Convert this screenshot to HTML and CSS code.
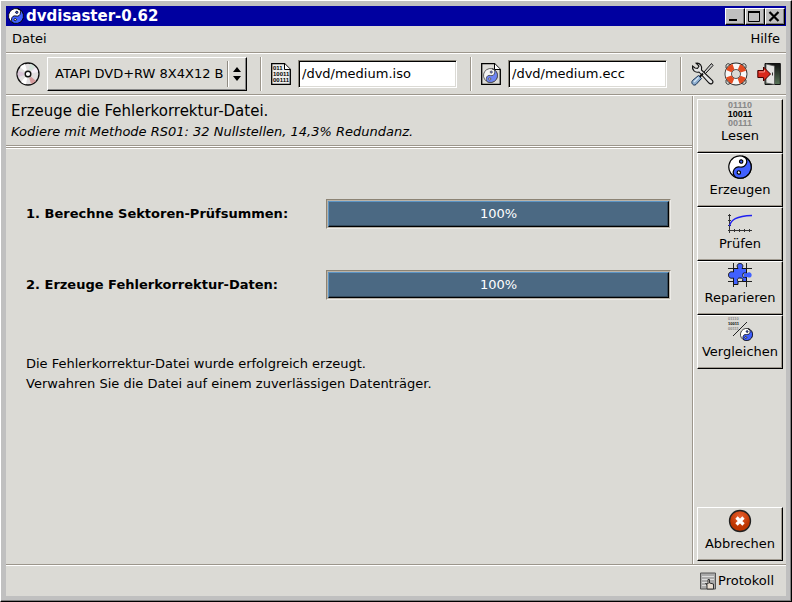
FILE: index.html
```html
<!DOCTYPE html>
<html lang="de">
<head>
<meta charset="utf-8">
<title>dvdisaster-0.62</title>
<link rel="stylesheet" href="styles.css">
</head>
<body>
<svg class="defs" aria-hidden="true">
  <symbol id="yinyang" viewBox="0 0 24 24">
    <g transform="rotate(12 12 12)" stroke="#000" stroke-width="1.2">
      <circle cx="12" cy="12" r="11.2" fill="#fff"/>
      <path d="M12 .8A5.6 5.6 0 0 1 12 12A5.6 5.6 0 0 0 12 23.2A11.2 11.2 0 0 0 12 .8Z" fill="#4060ff"/>
      <circle cx="12" cy="6.4" r="1.7" fill="#4060ff"/>
      <circle cx="12" cy="17.6" r="1.7" fill="#fff"/>
    </g>
  </symbol>
</svg>
<div class="window">
  <header class="titlebar">
    <svg class="title-icon" viewBox="0 0 24 24"><use href="#yinyang"/></svg>
    <h1>dvdisaster-0.62</h1>
    <button class="winbtn" aria-label="Minimieren"><svg viewBox="0 0 16 14"><path d="M3 11h8" stroke="#000" stroke-width="2"/></svg></button>
    <button class="winbtn" aria-label="Maximieren"><svg viewBox="0 0 16 14"><path d="M2.500 3v9.500h11V3" fill="none" stroke="#000"/><path d="M2 3h12" stroke="#000" stroke-width="2"/></svg></button>
    <button class="winbtn" aria-label="Schließen"><svg viewBox="0 0 16 14"><path d="M3.500 3l9 9M12.500 3l-9 9" stroke="#000" stroke-width="2.200"/></svg></button>
  </header>
  <nav class="menubar">
    <button class="menu">Datei</button>
    <button class="menu">Hilfe</button>
  </nav>
  <div class="toolbar">
    <svg class="icon24" viewBox="0 0 24 24">
      <circle cx="12" cy="12" r="11" fill="#e2dfe0" stroke="#111" stroke-width="1.300"/>
      <path d="M12 12L4 5A11 11 0 0 1 9 2Z" fill="#fff"/>
      <path d="M12 12L14 1.800A10.400 10.400 0 0 1 19 4.500Z" fill="#d4e4dc"/>
      <path d="M12 12L20 5.500A10.400 10.400 0 0 1 22 10Z" fill="#f5eef8"/>
      <path d="M12 12L20 19A10.400 10.400 0 0 1 15 22Z" fill="#d59a9c"/>
      <path d="M12 12L2 9A10.400 10.400 0 0 0 2 15Z" fill="#d8c4d6"/>
      <path d="M12 12L5 20A10.400 10.400 0 0 0 10 22.200Z" fill="#fff"/>
      <circle cx="12" cy="12" r="4" fill="#dedbd7"/>
      <circle cx="12" cy="12" r="2.800" fill="#fff" stroke="#111" stroke-width="1.400"/>
    </svg>
    <div class="drive">
      <select aria-label="Laufwerk"><option>ATAPI DVD+RW 8X4X12 B</option></select>
      <svg class="drive-arrows" viewBox="0 0 16 28"><path d="M.5 1v26" stroke="#8e8a82"/><path d="M1.500 1v26" stroke="#fff"/><path d="M6 12l4-5 4 5zM6 16l4 5 4-5z"/></svg>
    </div>
    <span class="sep"></span>
    <label class="file" for="iso" aria-label="Abbilddatei"><svg class="doc" viewBox="0 0 20 22">
      <path d="M.7.700H13.500L19.300 6.500V21.300H.7Z" fill="#eeeeec" stroke="#000" stroke-width="1.300"/>
      <path d="M13.500.700V6.500h5.800" fill="#fff" stroke="#000"/>
      <g class="bits-doc"><text x="2" y="7">011</text><text x="2" y="13">10011</text><text x="2" y="19">00111</text></g>
    </svg></label>
    <input class="entry" id="iso" type="text" value="/dvd/medium.iso">
    <span class="sep"></span>
    <label class="file" for="ecc" aria-label="Fehlerkorrektur-Datei"><svg class="doc" viewBox="0 0 20 22">
      <path d="M.7.700H13.500L19.300 6.500V21.300H.7Z" fill="#deddd9" stroke="#000" stroke-width="1.300"/>
      <path d="M13.500.700V6.500h5.800" fill="#fff" stroke="#000"/>
      <use href="#yinyang" x="2" y="5" width="15" height="15" opacity=".7"/>
    </svg></label>
    <input class="entry" id="ecc" type="text" value="/dvd/medium.ecc">
    <span class="sep"></span>
    <div class="actions">
      <button class="tool" aria-label="Einstellungen"><svg viewBox="0 0 24 24">
        <path d="M20.500 1.500L13 10l1.500 1.500L22 3.500Z" fill="#ccc" stroke="#111"/>
        <path d="M5 1.200L8 4 6.500 6.500 4 6 1.500 4C.8 8 4 11 8 10L18 21C20 23 23 21 21.500 18.500L10.500 8C11.500 4 9 .5 5 1.200Z" fill="#e4e4e4" stroke="#111" stroke-width="1.100"/>
        <path d="M12 11.500L8.500 15" stroke="#111" stroke-width="2"/>
        <path d="M7.500 13.500L1.500 18.500C-.5 21 2.500 24.500 5 22.500L10.500 16.500Z" fill="#8eaed0" stroke="#173052"/>
        <path d="M7.500 15.500L3 20" stroke="#d5e5f3" stroke-width="1.400"/>
      </svg></button>
      <button class="tool" aria-label="Hilfe"><svg viewBox="0 0 24 24">
        <path d="M2 6V3l2-1.500L7 3M17 3l3-1.500L22 3v3M2 18v3l2 1.500L7 21M17 21l3 1.500 2-1.500v-3" fill="none" stroke="#444"/>
        <circle cx="12" cy="12" r="7.700" fill="none" stroke="#222" stroke-width="7.400"/>
        <circle cx="12" cy="12" r="7.700" fill="none" stroke="#f7f7f7" stroke-width="5.800"/>
        <circle cx="12" cy="12" r="7.700" fill="none" stroke="#e44a20" stroke-width="5.800" stroke-dasharray="6.500 5.595" stroke-dashoffset="-2.800"/>
      </svg></button>
      <button class="tool" aria-label="Beenden"><svg viewBox="0 0 24 24">
        <defs><linearGradient id="dark" x2="0" y2="1"><stop offset="0" stop-color="#111"/><stop offset="1" stop-color="#5a765a"/></linearGradient></defs>
        <path d="M8 1.500H23.300V22.500H8Z" fill="url(#dark)" stroke="#111"/>
        <path d="M9 2L17.500 4V22.500L9 21Z" fill="#e4e4e2" stroke="#555" stroke-width=".8"/>
        <path d="M15.500 10.500v3" stroke="#333"/>
        <path d="M.8 8.500H6.500V5L13.500 12 6.500 19V15.500H.8Z" fill="#d9291c" stroke="#400"/>
        <path d="M2 10h5.500V8" fill="none" stroke="#f49186"/>
      </svg></button>
    </div>
  </div>
  <div class="body">
    <main class="main">
      <section class="heading">
        <h2>Erzeuge die Fehlerkorrektur-Datei.</h2>
        <p>Kodiere mit Methode RS01: 32 Nullstellen, 14,3% Redundanz.</p>
      </section>
      <section class="content">
        <div class="step"><span id="s1">1. Berechne Sektoren-Prüfsummen:</span><div class="trough"><div class="bar" role="progressbar" aria-valuenow="100" aria-labelledby="s1">100%</div></div></div>
        <div class="step"><span id="s2">2. Erzeuge Fehlerkorrektur-Daten:</span><div class="trough"><div class="bar" role="progressbar" aria-valuenow="100" aria-labelledby="s2">100%</div></div></div>
        <p class="result">Die Fehlerkorrektur-Datei wurde erfolgreich erzeugt.<br>Verwahren Sie die Datei auf einem zuverlässigen Datenträger.</p>
      </section>
    </main>
    <aside class="sidebar">
      <button class="side"><svg viewBox="0 0 26 26"><g class="bits"><text x="13" y="8" class="dim">01110</text><text x="13" y="17">10011</text><text x="13" y="26" class="dim">00111</text></g></svg>Lesen</button>
      <button class="side"><svg viewBox="0 0 26 26"><use href="#yinyang" x="1" y="1" width="24" height="24"/></svg>Erzeugen</button>
      <button class="side"><svg viewBox="0 0 26 26"><path d="M2.500 6V25M1 22.500H25M1 7.500h3M1 12.500h3M1 17.500h3M7.500 21v3M12.500 21v3M17.500 21v3M22.500 21v3" fill="none" stroke="#333"/><path d="M2.500 18C4 12 9 8 25 7.500" fill="none" stroke="#2020f0" stroke-width="1.400"/></svg>Prüfen</button>
      <button class="side"><svg viewBox="0 0 26 26"><path d="M6.500 1V25M19.500 1V25M1 6.500H25M1 19.500H25" stroke="#222"/><path d="M6.500 6.500H11C9 3 11 1.500 13 1.500S17 3 15 6.500H19.500V11H16.500C15.500 12.500 15.500 14 16.500 15.500H19.500V19.500H15.500C16.500 16.500 15 16 13 16S9.500 17 11 19.500V22.500H6.500V16C3 17 1.500 15 1.500 13S3 9 6.500 10Z" fill="#4060ff" stroke="#111"/><path d="M17 11C20 12.500 20.500 9.500 23 10.500S25 15 23 15.500 20 14 17 15.500Z" fill="#4060ff"/></svg>Reparieren</button>
      <button class="side"><svg viewBox="0 0 26 26"><g class="bits-small"><text x="1" y="4" class="dim">01110</text><text x="1" y="9">10011</text><text x="1" y="14" class="dim">00111</text></g><path d="M20 6L6 20" stroke="#222"/><use href="#yinyang" x="13" y="12" width="13" height="13"/></svg>Vergleichen</button>
      <button class="side cancel"><svg viewBox="0 0 26 26"><defs><radialGradient id="red" cy=".3"><stop offset="0" stop-color="#e86030"/><stop offset="1" stop-color="#bd3500"/></radialGradient></defs><circle cx="13" cy="13" r="10.500" fill="url(#red)" stroke="#222" stroke-width="1.300"/><path d="M9.500 9.500l7 7M16.500 9.500l-7 7" stroke="#fff" stroke-width="3.200"/></svg>Abbrechen</button>
    </aside>
  </div>
  <footer class="statusbar">
    <button class="log"><svg viewBox="0 0 16 18"><path d="M.5 1H15.500V17H.5Z" fill="#aaa" stroke="#555"/><path d="M2 4.500H14M2 7.500H14M2 10.500H9M2 13.500H6" stroke="#ddd"/><path d="M7 17V13L5.500 11.500 8 12V7.500H9.500V11L13.500 12V17Z" fill="#e8ddd0" stroke="#333"/></svg>Protokoll</button>
  </footer>
</div>
</body>
</html>
```

FILE: styles.css
```css
* { box-sizing: border-box; }

body {
  margin: 0;
  background: #dbdad5;
  color: #000;
  font: 13px/20px "DejaVu Sans", sans-serif;
}

h1, h2, p { margin: 0; }

button, input, select {
  margin: 0;
  padding: 0;
  border: 0;
  border-radius: 0;
  background: none;
  color: inherit;
  font: inherit;
}

svg { display: block; flex: none; }

.defs { position: absolute; width: 0; height: 0; }

.window {
  display: flex;
  flex-direction: column;
  min-height: 100vh;
  padding: 5px;
  border: 1px solid;
  border-color: #fff #000 #000 #fff;
  background: #dbdad5;
  box-shadow: inset -1px -1px #808080, inset 0 0 0 5px #c0c0c0;
}

.titlebar {
  display: flex;
  align-items: center;
  height: 20px;
  padding: 0 1px 0 2px;
  background: #0000a0;
  color: #fff;
}

.title-icon { width: 16px; height: 16px; }

.titlebar h1 {
  flex: 1;
  margin-left: 2px;
  font-size: 15px;
  line-height: 20px;
}

.winbtn {
  width: 20px;
  height: 17px;
  border: 1px solid;
  border-color: #fff #000 #000 #fff;
  background: #c0c0c0;
  box-shadow: inset -1px -1px #808080;
}

.winbtn svg { width: 16px; height: 14px; }

.menubar {
  display: flex;
  justify-content: space-between;
  height: 28px;
  padding: 2px 6px 4px;
  border-bottom: 1px solid #fff;
  box-shadow: inset 0 -1px #9c968c;
}

.toolbar {
  display: flex;
  align-items: center;
  height: 42px;
  padding: 0 5px 2px 10px;
  border-bottom: 1px solid #fff;
  box-shadow: inset 0 -1px #9c968c;
}

.icon24 { width: 24px; height: 24px; }

.drive {
  position: relative;
  width: 200px;
  height: 34px;
  margin: 0 13px 0 7px;
}

.drive select {
  width: 100%;
  height: 100%;
  padding-left: 7px;
  appearance: none;
  border: 1px solid;
  border-color: #fff #000 #000 #fff;
  box-shadow: inset -1px -1px #888;
}

.drive-arrows {
  position: absolute;
  top: 3px;
  right: 4px;
  width: 16px;
  height: 28px;
  pointer-events: none;
}

.sep {
  flex: none;
  width: 2px;
  height: 34px;
  border-left: 1px solid #9c968c;
  border-right: 1px solid #fff;
}

.file { margin: 0 7px 0 9px; }
.doc { width: 20px; height: 22px; }

.entry {
  flex: 1;
  min-width: 0;
  height: 28px;
  margin-right: 13px;
  padding-left: 3px;
  border: 1px solid;
  border-color: #8c877c #fff #fff #8c877c;
  background: #fff;
  box-shadow: inset 1px 1px #000, inset -1px -1px #dbdad5;
}

.actions {
  display: flex;
  gap: 9px;
  margin-left: 9px;
}

.tool svg { width: 24px; height: 24px; }

.bits, .bits-small, .bits-doc {
  font-family: "Liberation Sans", sans-serif;
  font-weight: bold;
}

.bits { font-size: 9px; text-anchor: middle; }
.bits-small { font-size: 4px; }
.bits-doc { font-size: 6px; }
.side .bits-small .dim, .dim { fill: #888; }

.body { display: flex; flex: 1; }

.main { flex: 1; }

.heading {
  height: 53px;
  padding: 4px 5px;
  border-bottom: 1px solid #fff;
  box-shadow: inset 0 -1px #9c968c, inset 0 -2px #fff, inset 0 -3px #9c968c;
}

.heading h2 {
  font-size: 15px;
  font-weight: normal;
  line-height: 22px;
}

.heading p { font-style: italic; }

.content { padding: 50px 21px 20px 20px; }

.step {
  display: grid;
  grid-template-columns: 300px 1fr;
  align-items: center;
  margin-bottom: 41px;
  font-weight: bold;
}

.trough {
  height: 30px;
  border: 1px solid;
  border-color: #8c8374 #eeece8 #eeece8 #8c8374;
  background: #b9b3a8;
  padding: 1px;
}

.bar {
  height: 26px;
  border: 1px solid;
  border-color: #5c94c4 #000 #000 #5c94c4;
  background: #4b6983;
  box-shadow: inset -1px -1px #344a5c;
  color: #fff;
  font-weight: normal;
  line-height: 24px;
  text-align: center;
}

.result { padding-top: 13px; }

.sidebar {
  display: flex;
  flex-direction: column;
  width: 94px;
  padding: 3px 3px 3px 4px;
  border-left: 1px solid #9c968c;
  box-shadow: inset 1px 0 #fff;
}

.side {
  display: flex;
  flex-direction: column;
  align-items: center;
  height: 54px;
  border: 1px solid;
  border-color: #fff #000 #000 #fff;
  box-shadow: inset -1px -1px #a09a90;
  white-space: nowrap;
}

.side svg { width: 26px; height: 26px; overflow: visible; }
.cancel { margin-top: auto; }

.statusbar {
  display: flex;
  justify-content: flex-end;
  height: 32px;
  padding: 1px 12px 0;
  border-top: 1px solid #9c968c;
  box-shadow: inset 0 1px #fff;
}

.log {
  display: flex;
  align-items: center;
  gap: 2px;
}

.log svg { width: 16px; height: 18px; }
```
